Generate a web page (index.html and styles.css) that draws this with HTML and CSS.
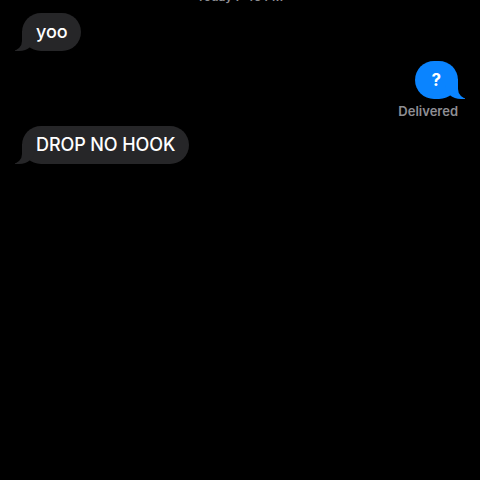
FILE: index.html
```html
<!DOCTYPE html>
<html>
<head>
<meta charset="utf-8">
<link rel="stylesheet" href="styles.css">
</head>
<body>
<div class="chat">
  <div class="stamp">Today 7:46 PM</div>
  <div class="row in"><div class="bubble gray">yoo</div></div>
  <div class="row out"><div class="bubble blue">?</div></div>
  <div class="status">Delivered</div>
  <div class="row in"><div class="bubble gray">DROP NO HOOK</div></div>
</div>
</body>
</html>
```
FILE: styles.css
```css
html, body {
  margin: 0;
  padding: 0;
  background: #000;
  height: 100%;
  overflow: hidden;
}
.chat {
  font-family: Inter, "Liberation Sans", sans-serif;
  display: flex;
  flex-direction: column;
  padding: 0 22px 0 22px;
}
.stamp {
  margin-top: -11px;
  height: 15px;
  text-align: center;
  font-size: 12px;
  font-weight: 600;
  color: #8e8e93;
  line-height: 15px;
}
.row {
  display: flex;
}
.row.in { justify-content: flex-start; margin-top: 9px; }
.row.out { justify-content: flex-end; margin-top: 10px; }
.row.out + .status + .row.in { margin-top: 7px; }
.bubble {
  position: relative;
  font-size: 18px;
  line-height: 22px;
  padding: 8px 14px;
  border-radius: 19px;
  color: #fff;
  font-weight: 500;
  letter-spacing: -0.1px;
}
.gray { background: #262628; }
.blue { background: #0a84ff; font-weight: 700; font-size: 17px; padding: 8px 17px; }
.bubble::before, .bubble::after {
  content: "";
  position: absolute;
  bottom: 0;
  height: 20px;
}
.gray::before {
  left: -7px;
  width: 20px;
  background: #262628;
  border-bottom-right-radius: 16px 14px;
}
.gray::after {
  left: -10px;
  width: 10px;
  background: #000;
  border-bottom-right-radius: 10px;
}
.blue::before {
  right: -7px;
  width: 20px;
  background: #0a84ff;
  border-bottom-left-radius: 16px 14px;
}
.blue::after {
  right: -10px;
  width: 10px;
  background: #000;
  border-bottom-left-radius: 10px;
}
.status {
  text-align: right;
  font-size: 13px;
  font-weight: 600;
  color: #8e8e93;
  margin-top: 4px;
  line-height: 16px;
}
```
